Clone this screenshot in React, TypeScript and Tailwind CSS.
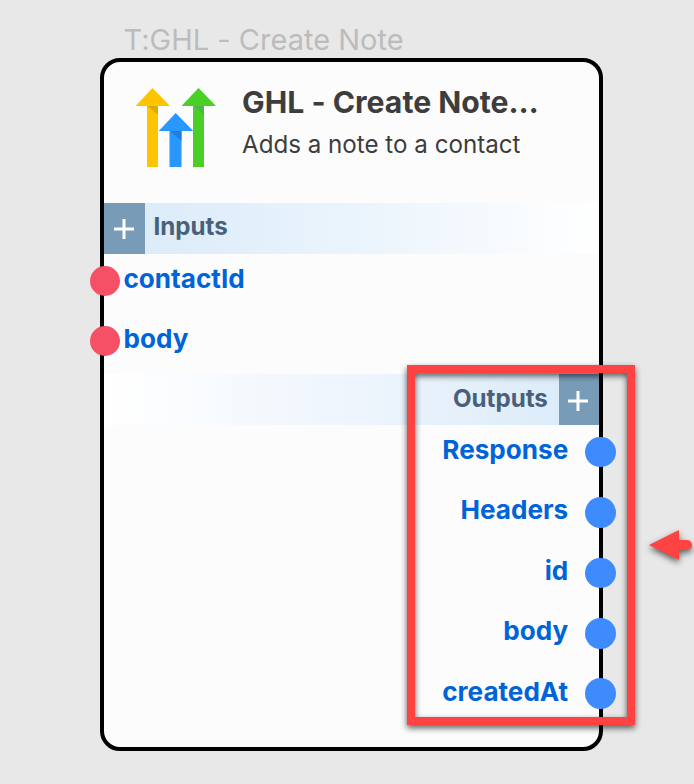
import React from "react";

const INPUTS = ["contactId", "body"];
const OUTPUTS = ["Response", "Headers", "id", "body", "createdAt"];

function Logo() {
  return (
    <svg className="ml-[31px] mt-[26px] h-[80px] w-[82px] shrink-0" viewBox="135 88 82 80">
      <path d="M147 105h11v62h-11z" fill="#ffc400" />
      <path d="M147.5 106H158v9z" fill="#e0aa00" />
      <path d="M152.5 88 170 106h-34.500z" fill="#ffc400" />
      <path d="M193 105h11v62h-11z" fill="#49cf26" />
      <path d="M193.500 106H204v9z" fill="#4db848" />
      <path d="M198.500 88 216 106h-34.500z" fill="#49cf26" />
      <path d="M169.500 130h12v37h-12z" fill="#2997ff" />
      <path d="M170 131h11.500v10z" fill="#1f80dc" />
      <path d="M175.700 113 193.300 131h-34.600z" fill="#2997ff" />
    </svg>
  );
}

function PlusButton() {
  return (
    <button className="flex w-[40.5px] shrink-0 items-center justify-center bg-[#789bb8]">
      <svg className="mr-[1.500px] mt-[2px] h-[20px] w-[20px]" viewBox="0 0 20 20">
        <path d="M0 10h20M10 0v20" stroke="#fff" strokeWidth="3" />
      </svg>
    </button>
  );
}

function InputRow({ name }: { name: string }) {
  return (
    <div className="-ml-[14px] flex h-[60.4px] items-start">
      <span className="mt-[12.300px] h-[30px] w-[30px] shrink-0 rounded-full bg-[#f55065]" />
      <span className="ml-[3.500px] mt-[9px] text-[26.100px] leading-[32px] font-bold text-[#0064d8]">{name}</span>
    </div>
  );
}

function OutputRow({ name }: { name: string }) {
  return (
    <div className="-mr-[16.300px] flex h-[60.4px] items-start justify-end">
      <span className="mr-[17px] mt-[9.200px] text-[26.100px] leading-[32px] font-bold text-[#0064d8]">{name}</span>
      <span className="mt-[12px] h-[30.500px] w-[30.500px] shrink-0 rounded-full bg-[#3d8bfd]" />
    </div>
  );
}

export default function App() {
  return (
    <div className="relative h-[784px] w-[694px] overflow-hidden bg-[#e8e8e8] pl-[100px] pt-[22px] font-['Inter',sans-serif] [font-variant-ligatures:no-contextual]">
      <div className="h-[36px] whitespace-nowrap pl-[23.500px] text-[29px] leading-[36px] text-[#bcbcbc]">T:GHL - Create Note</div>
      <div className="flex h-[693px] w-[503.400px] flex-col rounded-[20px] border-4 border-black bg-[#fcfcfc]">
        <div className="flex h-[141.300px] shrink-0">
          <Logo />
          <div className="ml-[25px] pt-[22px] text-[#3d3d3d]">
            <h1 className="whitespace-nowrap text-[30.200px] leading-[36px] font-bold">GHL - Create Note…</h1>
            <p className="mt-[10px] whitespace-nowrap text-[24.150px] leading-[30px]">Adds a note to a contact</p>
          </div>
        </div>
        <div className="flex h-[50.400px] shrink-0 bg-linear-to-r from-[#d9eaf8] via-[#eaf4fc] to-white">
          <PlusButton />
          <span className="ml-[9px] mt-[9px] text-[24.150px] leading-[30px] font-bold text-[#48607a]">Inputs</span>
        </div>
        {INPUTS.map((name) => <InputRow key={name} name={name} />)}
        <div className="flex h-[50.400px] shrink-0 justify-end bg-linear-to-l from-[#d9eaf8] via-[#eef5fd] to-white">
          <span className="mr-[11px] mt-[9.500px] text-[24.150px] leading-[30px] font-bold text-[#48607a]">Outputs</span>
          <PlusButton />
        </div>
        {OUTPUTS.map((name) => <OutputRow key={name} name={name} />)}
      </div>
      <div className="absolute left-[407px] top-[365px] h-[360px] w-[228px] border-8 border-[#ff4343] [filter:drop-shadow(0_3px_3px_rgba(0,0,0,0.65))]" />
      <svg className="absolute left-[640px] top-[520px] h-[54px] w-[54px] [filter:drop-shadow(0_3px_3px_rgba(0,0,0,0.6))]" viewBox="640 520 54 54">
        <path d="M649 545 679 530v10h8a5 5 0 0 1 0 10h-8v10z" fill="#ff4343" />
      </svg>
    </div>
  );
}
